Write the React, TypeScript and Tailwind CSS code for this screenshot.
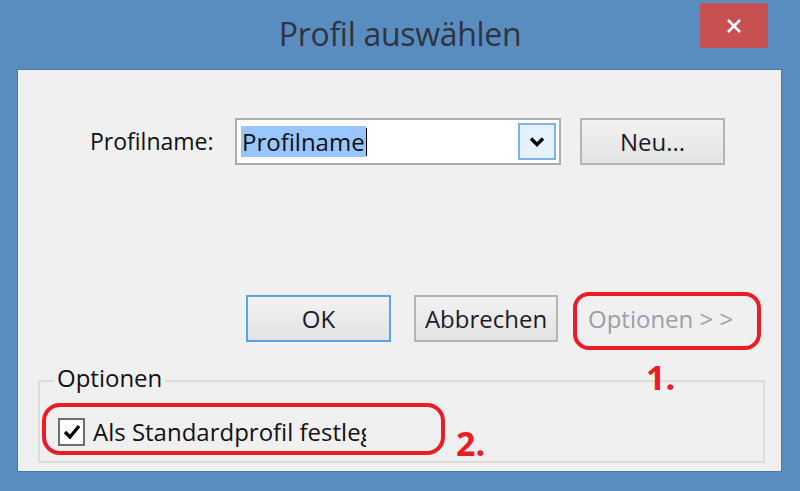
import React from "react";

const font = { fontFamily: "'Open Sans', 'Noto Sans', sans-serif" };

function Button({ children, focused, disabled, className = "" }: { children: React.ReactNode; focused?: boolean; disabled?: boolean; className?: string }) {
  return (
    <div
      className={`flex items-center justify-center h-[47px] border-2 bg-gradient-to-b text-[24px] font-medium ${
        focused ? "border-[#5aa3ea]" : "border-[#b4b4b4]"
      } ${disabled ? "text-[#9aa0aa] border-transparent from-transparent to-transparent" : "text-[#1b1b2b] from-[#f2f2f2] to-[#e3e3e3]"} ${className}`}
    >
      {children}
    </div>
  );
}

export default function App() {
  return (
    <div className="relative w-[800px] h-[491px] bg-[#5a8dbf] overflow-hidden" style={font}>
      {/* Title bar */}
      <div className="relative h-[69px] flex items-center justify-center">
        <span className="text-[32px] text-[#2e3440] tracking-[-0.3px] pb-[1px]">Profil auswählen</span>
        <div className="absolute right-[32px] top-[3px] w-[68px] h-[45px] bg-[#c75050] flex items-center justify-center">
          <svg width="16" height="16" viewBox="0 0 16 16">
            <path d="M2 2 L14 14 M14 2 L2 14" stroke="white" strokeWidth="2.6" />
          </svg>
        </div>
      </div>

      {/* Client area */}
      <div className="ml-[17px] mr-[18px] h-[403px] bg-[#f0f0f0] border border-[#4a7aa8] flex flex-col">
        {/* Profile row */}
        <div className="flex items-center mt-[48px] pl-[72px]">
          <span className="w-[145px] text-[23px] font-medium text-[#111]">Profilname:</span>
          <div className="w-[326px] h-[47px] bg-white border-2 border-[#adadad] flex items-center pl-[4px] pr-[3px]">
            <div className="flex items-center flex-1">
              <span className="bg-[#99c6ff] text-[24px] font-medium text-[#111] leading-[31px] px-[1px]">Profilname</span>
              <span className="w-[1px] h-[28px] bg-black" />
            </div>
            <div className="w-[38px] h-[37px] bg-[#e5f1fb] border-2 border-[#7db3e8] flex items-center justify-center">
              <svg width="16" height="11" viewBox="0 0 16 11">
                <path d="M2 2.5 L8 8.5 L14 2.5" stroke="black" strokeWidth="3.4" fill="none" />
              </svg>
            </div>
          </div>
          <Button className="w-[145px] ml-[19px]">Neu...</Button>
        </div>

        {/* Buttons row */}
        <div className="flex items-center mt-[130px] pl-[228px]">
          <Button focused className="w-[145px]">OK</Button>
          <Button className="w-[144px] ml-[23px]">Abbrechen</Button>
          <Button disabled className="w-[180px] ml-[17px] justify-start pl-[11px]">
            Optionen &gt; &gt;
          </Button>
        </div>

        {/* Group box */}
        <div className="relative mt-[38px] ml-[20px] mr-[16px] h-[83px] border-2 border-[#dcdcdc]">
          <span className="absolute -top-[20px] left-[14px] px-[3px] bg-[#f0f0f0] text-[24px] font-medium text-[#111] leading-[32px]">Optionen</span>
          <div className="flex items-center mt-[32px] ml-[18px]">
            <div className="w-[27px] h-[28px] bg-white border-2 border-[#6e6e6e] flex items-center justify-center">
              <svg width="18" height="16" viewBox="0 0 18 16">
                <path d="M2 8 L7 13 L16 2" stroke="black" strokeWidth="3.2" fill="none" />
              </svg>
            </div>
            {/* label is clipped in the original dialog */}
            <div className="w-[273px] overflow-hidden whitespace-nowrap ml-[8px]">
              <span className="text-[24px] font-medium text-[#111]">Als Standardprofil festlegen</span>
            </div>
          </div>
        </div>
      </div>

      {/* Red annotations */}
      <div className="absolute left-[573px] top-[292px] w-[188px] h-[58px] border-[4px] border-[#ed1c24] rounded-[16px]" />
      <span className="absolute left-[646px] top-[352px] text-[34px] font-bold text-[#ed1c24]">1.</span>
      <div className="absolute left-[42px] top-[403px] w-[403px] h-[52px] border-[4px] border-[#ed1c24] rounded-[18px]" />
      <span className="absolute left-[456px] top-[418px] text-[34px] font-bold text-[#ed1c24]">2.</span>
    </div>
  );
}
